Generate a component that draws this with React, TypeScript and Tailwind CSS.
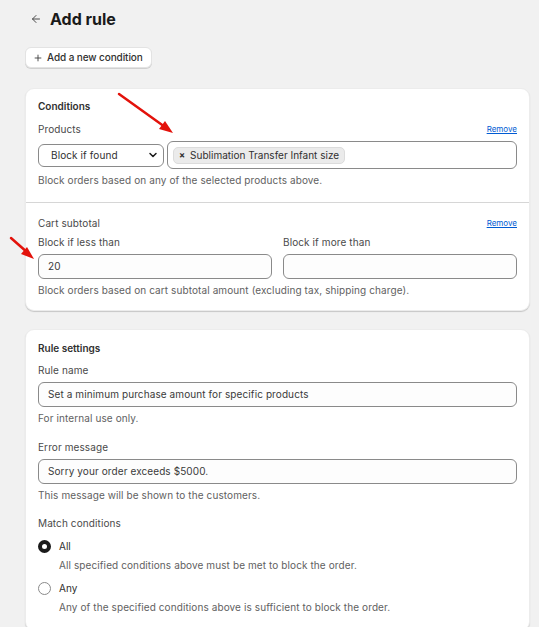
import type React from "react"
import { ArrowLeft, ChevronDown, Plus } from "lucide-react"

const Help: React.FC<{ children: React.ReactNode; className?: string }> = ({ children, className = "" }) => (
  <p className={`text-[10px] leading-[14px] tracking-[0.1px] text-[#616161] ${className}`}>{children}</p>
)

const Label: React.FC<{ children: React.ReactNode; className?: string }> = ({ children, className = "" }) => (
  <p className={`text-[10px] leading-[14px] tracking-[0.1px] text-[#4a4a4a] ${className}`}>{children}</p>
)

const TextInput: React.FC<{ value?: string; className?: string }> = ({ value = "", className = "" }) => (
  <div
    className={`h-[25px] rounded-[6px] border border-[#8a8a8a] bg-[#fdfdfd] px-[9px] flex items-center text-[10px] tracking-[0.1px] text-[#3a3a3a] ${className}`}
  >
    {value}
  </div>
)

const Remove: React.FC = () => (
  <a href="#" className="text-[8px] leading-[12px] text-[#005bd3] underline">
    Remove
  </a>
)

const Radio: React.FC<{ checked?: boolean; label: string; desc: string; className?: string }> = ({
  checked,
  label,
  desc,
  className = "",
}) => (
  <div className={className}>
    <div className="flex items-center h-[14px]">
      {checked ? (
        <span className="w-[13px] h-[13px] rounded-full border-[4px] border-[#1a1a1a] bg-white" />
      ) : (
        <span className="w-[13px] h-[13px] rounded-full border border-[#8a8a8a] bg-white" />
      )}
      <span className="ml-[8px] text-[10px] text-[#303030]">{label}</span>
    </div>
    <Help className="ml-[21px] mt-[5px]">{desc}</Help>
  </div>
)

export default function App() {
  return (
    <div
      className="relative min-h-[627px] bg-[#f1f1f1] pl-[25px] pr-[9px] text-[#303030]"
      style={{ fontFamily: "Inter, 'Noto Sans', sans-serif" }}
    >
      {/* Header */}
      <div className="flex items-center pt-[9px] h-[29px]">
        <ArrowLeft className="w-[12px] h-[12px] ml-[5px] text-[#4a4a4a]" strokeWidth={2} />
        <h1 className="ml-[8px] text-[16px] font-bold leading-[20px] text-[#1a1a1a]">Add rule</h1>
      </div>

      <button className="mt-[18px] h-[21px] pl-[7px] pr-[8px] flex items-center gap-[4px] rounded-[6px] bg-white border border-[#e3e3e3] shadow-[0_1px_0_#d0d0d0] text-[10px] font-medium tracking-[-0.1px] text-[#303030]">
        <Plus className="w-[10px] h-[10px]" strokeWidth={2} />
        Add a new condition
      </button>

      {/* Conditions card */}
      <div className="mt-[20px] rounded-[9px] bg-white shadow-[0_1px_1px_rgba(0,0,0,0.18)] border border-[#ececec]">
        <div className="px-[12px] pt-[10px] pb-[15px]">
          <p className="text-[10px] leading-[14px] font-semibold text-[#303030]">Conditions</p>
          <div className="mt-[9px] flex items-center justify-between">
            <Label>Products</Label>
            <Remove />
          </div>
          <div className="mt-[5px] flex items-center gap-[3px] h-[28px]">
            <div className="w-[126px] h-[23px] rounded-[6px] border border-[#8a8a8a] bg-white flex items-center justify-between pl-[12px] pr-[4px] text-[10px] tracking-[0.1px] text-[#303030]">
              Block if found
              <ChevronDown className="w-[12px] h-[12px] text-[#1a1a1a]" strokeWidth={3} />
            </div>
            <div className="flex-1 h-[28px] rounded-[6px] border border-[#8a8a8a] bg-white flex items-center px-[5px]">
              <span className="h-[17px] flex items-center gap-[5px] rounded-[5px] bg-[#ebebeb] border border-[#dcdcdc] px-[5px] text-[10px] text-[#303030]">
                <span className="text-[9px] font-bold">×</span>
                Sublimation Transfer Infant size
              </span>
            </div>
          </div>
          <Help className="mt-[4px]">Block orders based on any of the selected products above.</Help>
        </div>
        <div className="border-t border-[#d6d6d6]" />
        <div className="px-[12px] pt-[13px] pb-[13px]">
          <div className="flex items-center justify-between">
            <Label>Cart subtotal</Label>
            <Remove />
          </div>
          <div className="mt-[5px] grid grid-cols-2 gap-x-[11px]">
            <Label>Block if less than</Label>
            <Label>Block if more than</Label>
            <TextInput value="20" className="mt-[5px]" />
            <TextInput className="mt-[5px]" />
          </div>
          <Help className="mt-[4px]">
            Block orders based on cart subtotal amount (excluding tax, shipping charge).
          </Help>
        </div>
      </div>

      {/* Rule settings card */}
      <div className="mt-[18px] rounded-[9px] bg-white shadow-[0_1px_1px_rgba(0,0,0,0.18)] border border-[#ececec] px-[12px] pt-[11px] pb-[16px]">
        <p className="text-[10px] leading-[14px] font-semibold text-[#303030]">Rule settings</p>
        <Label className="mt-[8px]">Rule name</Label>
        <TextInput value="Set a minimum purchase amount for specific products" className="mt-[5px]" />
        <Help className="mt-[4px]">For internal use only.</Help>
        <Label className="mt-[15px]">Error message</Label>
        <TextInput value="Sorry your order exceeds $5000." className="mt-[5px]" />
        <Help className="mt-[4px]">This message will be shown to the customers.</Help>
        <Label className="mt-[14px]">Match conditions</Label>
        <Radio
          checked
          label="All"
          desc="All specified conditions above must be met to block the order."
          className="mt-[9px]"
        />
        <Radio
          label="Any"
          desc="Any of the specified conditions above is sufficient to block the order."
          className="mt-[9px]"
        />
      </div>

      {/* Red annotation arrows */}
      <svg className="absolute left-0 top-0 pointer-events-none" width="539" height="627" viewBox="0 0 539 627">
        <g stroke="#e3120b" strokeWidth="2.5" strokeLinecap="round">
          <line x1="119" y1="94" x2="165" y2="127" />
          <line x1="11" y1="238" x2="28" y2="253" />
        </g>
        <g fill="#e3120b">
          <polygon points="173,133 159,129 165,121" />
          <polygon points="34,259 21,254 27,247" />
        </g>
      </svg>
    </div>
  )
}
